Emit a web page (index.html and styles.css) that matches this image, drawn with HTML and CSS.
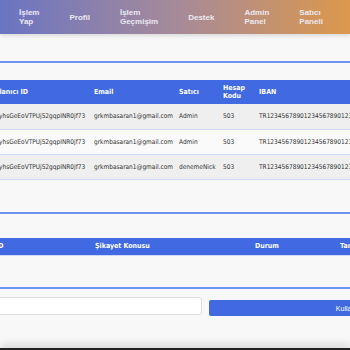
FILE: index.html
```html
<!DOCTYPE html>
<html lang="tr">
<head>
  <meta charset="UTF-8">
  <meta name="viewport" content="width=device-width, initial-scale=1.0">
  <title>Admin Panel</title>
  <link rel="stylesheet" href="styles.css">
</head>
<body>
  <header class="topbar">
    <nav class="nav">
      <a href="#" class="nav-link">İşlem Yap</a>
      <a href="#" class="nav-link">Profil</a>
      <a href="#" class="nav-link">İşlem Geçmişim</a>
      <a href="#" class="nav-link">Destek</a>
      <a href="#" class="nav-link">Admin Panel</a>
      <a href="#" class="nav-link">Satıcı Paneli</a>
    </nav>
  </header>
  <main class="panel">
    <!-- Kullanıcılar -->
    <section class="block block-users">
      <table class="data-table users-table">
        <thead>
          <tr>
            <th class="c-id">Kullanıcı ID</th>
            <th class="c-mail">Email</th>
            <th class="c-seller">Satıcı</th>
            <th class="c-code">Hesap Kodu</th>
            <th class="c-iban">IBAN</th>
          </tr>
        </thead>
        <tbody id="user-rows"></tbody>
      </table>
    </section>
    <!-- Şikayetler -->
    <section class="block block-tickets">
      <table class="data-table tickets-table">
        <thead>
          <tr>
            <th class="t-id">ID</th>
            <th class="t-subject">Şikayet Konusu</th>
            <th class="t-status">Durum</th>
            <th class="t-date">Tarih</th>
          </tr>
        </thead>
        <tbody></tbody>
      </table>
    </section>
    <!-- Kullanıcı arama -->
    <section class="block block-search">
      <form class="search-form" onsubmit="return false">
        <input type="text" class="search-input">
        <button class="search-btn">Kullanıcı Ara</button>
      </form>
    </section>
  </main>
  <footer class="footer"></footer>
  <script>
    const users = [
      { id: "Kx0yhsGeEoVTPUj52gqpINR0jf73", email: "grkmbasaran1@gmail.com", seller: "Admin", code: "503", iban: "TR123456789012345678901234" },
      { id: "Kx0yhsGeEoVTPUj52gqpINR0jf73", email: "grkmbasaran1@gmail.com", seller: "Admin", code: "503", iban: "TR123456789012345678901234" },
      { id: "Kx0yhsGeEoVTPUj52gqpINR0jf73", email: "grkmbasaran1@gmail.com", seller: "denemeNick", code: "503", iban: "TR123456789012345678901234" }
    ];
    const body = document.getElementById('user-rows');
    users.forEach(u => {
      const tr = document.createElement('tr');
      tr.innerHTML = `
        <td>${u.id}</td>
        <td>${u.email}</td>
        <td>${u.seller}</td>
        <td>${u.code}</td>
        <td>${u.iban}</td>
      `;
      body.appendChild(tr);
    });
  </script>
</body>
</html>
```

FILE: styles.css
```css
:root {
  --blue: #4169e1;
  --line: #6f93f2;
  --soft: #cfd9f5;
  --bg: #f8f8f8;
  --text: #333;
}
* { box-sizing: border-box; }
body {
  margin: 0;
  background: var(--bg);
  color: var(--text);
  font-family: 'DejaVu Sans Condensed', 'DejaVu Sans', Verdana, sans-serif;
  overflow: hidden;
  height: 350px;
  position: relative;
}
.topbar {
  height: 34px;
  background: linear-gradient(90deg, #6a74c3 0%, #a68a9a 50%, #dc984c 100%);
  box-shadow: 0 2px 4px rgba(0,0,0,0.12);
  display: flex;
  align-items: center;
}
.nav {
  display: flex;
  align-items: center;
  padding-left: 19px;
}
.nav-link {
  width: min-content;
  color: #ece8f2;
  text-decoration: none;
  font-family: 'Liberation Sans', Arial, sans-serif;
  font-weight: bold;
  font-size: 8px;
  line-height: 9px;
  margin-right: 30px;
}
.panel {
  margin-left: -17px;
  width: 600px;
  padding-top: 27px;
}
.block {
  border-top: 2px solid var(--line);
}
.block-users { padding: 17px 0 32px; }
.block-tickets { padding: 24px 0 31px; }
.block-search { padding: 8px 0; }
.data-table {
  border-collapse: collapse;
  table-layout: fixed;
  font-size: 6.5px;
}
.data-table th {
  background: var(--blue);
  color: #fff;
  font-weight: bold;
  text-align: left;
  padding: 0 5px;
  line-height: 8px;
  font-size: 7px;
}
.data-table td {
  padding: 0 5px;
  height: 25px;
  white-space: nowrap;
  overflow: hidden;
  border-bottom: 1px solid var(--soft);
}
.users-table { width: 600px; }
.users-table th { height: 24px; }
.users-table tbody tr:nth-child(odd) { background: #efefef; }
.users-table tbody tr:nth-child(even) { background: #fafafa; }
.c-id { width: 106px; }
.c-mail { width: 85px; }
.c-seller { width: 44px; }
.c-code { width: 36px; }
.tickets-table { width: 600px; border-bottom: 1px solid var(--soft); }
.tickets-table th { height: 18px; }
.t-id { width: 107px; padding-left: 13px !important; }
.t-subject { width: 160px; }
.t-status { width: 85px; }
.search-form {
  display: flex;
  align-items: flex-start;
  gap: 7px;
}
.search-input {
  width: 219px;
  height: 18px;
  border: 1px solid #ddd;
  border-radius: 3px;
  background: #fff;
}
.search-btn {
  margin-top: 3px;
  width: 293px;
  height: 16px;
  border: none;
  border-radius: 2px;
  background: var(--blue);
  color: #fff;
  font-family: 'Liberation Sans', Arial, sans-serif;
  font-size: 7px;
}
.footer {
  position: absolute;
  left: 0;
  right: 0;
  top: 348px;
  height: 10px;
  background: #222;
  box-shadow: 0 -4px 8px rgba(0,0,0,0.12);
}
```
